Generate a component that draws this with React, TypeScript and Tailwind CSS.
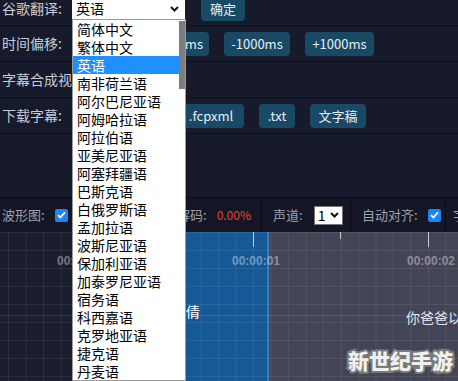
import React from 'react';

const languages = [
  '简体中文', '繁体中文', '英语', '南非荷兰语', '阿尔巴尼亚语', '阿姆哈拉语', '阿拉伯语',
  '亚美尼亚语', '阿塞拜疆语', '巴斯克语', '白俄罗斯语', '孟加拉语', '波斯尼亚语', '保加利亚语',
  '加泰罗尼亚语', '宿务语', '科西嘉语', '克罗地亚语', '捷克语', '丹麦语',
];

function Chevron() {
  return (
    <svg width="9" height="6" viewBox="0 0 9 6" className="shrink-0">
      <path d="M1 1l3.5 3.5L8 1" stroke="#111" strokeWidth="2" fill="none" />
    </svg>
  );
}

function Checkbox() {
  return (
    <span className="w-[13px] h-[13px] rounded-[2px] bg-[#1d84f2] flex items-center justify-center shrink-0">
      <svg width="9" height="8" viewBox="0 0 9 8">
        <path d="M1 4.2l2.3 2.3L8 1.3" stroke="#fff" strokeWidth="1.8" fill="none" />
      </svg>
    </span>
  );
}

function Btn({ label, w }: { label: string; w: string }) {
  return (
    <div className={`${w} h-[24px] rounded-[4px] bg-[#184a66] text-[13px] text-[#e6eef4] flex items-center justify-center shrink-0`}>
      {label}
    </div>
  );
}

function Row({ label, h = 'h-[36px]', children }: { label: string; h?: string; children?: React.ReactNode }) {
  return (
    <div className={`${h} flex items-center border-b border-[#0c0d16]`}>
      <div className="w-[72px] pl-[2px] text-[14px] text-[#c9cbd5] whitespace-nowrap shrink-0">{label}</div>
      {children}
    </div>
  );
}

export default function App() {
  return (
    <div className="relative w-[458px] h-[381px] overflow-hidden bg-[#171a2b] [font-family:'Noto_Sans_CJK_SC','Noto_Sans',sans-serif]">
      <div className="-mt-[8px]">
        <Row label="谷歌翻译:" h="h-[34px]">
          <div className="w-[113px] h-[22px] bg-white flex items-center justify-between pl-[4px] pr-[6px] text-[14px] text-black">
            <span>英语</span>
            <Chevron />
          </div>
          <div className="ml-[16px]">
            <Btn label="确定" w="w-[44px]" />
          </div>
        </Row>
        <Row label="时间偏移:">
          <div className="flex gap-[15px] ml-[7px]">
            <Btn label="-100ms" w="w-[56px]" />
            <Btn label="+100ms" w="w-[59px]" />
            <Btn label="-1000ms" w="w-[66px]" />
            <Btn label="+1000ms" w="w-[69px]" />
          </div>
        </Row>
        <Row label="字幕合成视频:" />
        <Row label="下载字幕:">
          <div className="flex gap-[15px] ml-[1px]">
            <Btn label=".srt" w="w-[38px]" />
            <Btn label=".ass" w="w-[37px]" />
            <Btn label=".fcpxml" w="w-[66px]" />
            <Btn label=".txt" w="w-[36px]" />
            <Btn label="文字稿" w="w-[56px]" />
          </div>
        </Row>
      </div>

      <div className="h-[63px]" />

      {/* toolbar */}
      <div className="h-[35px] flex items-stretch border-t border-[#0c0d16] bg-[#141626] text-[13px] text-[#9ea1ad] whitespace-nowrap">
        <div className="w-[262px] shrink-0 flex items-center justify-between pl-[2px] pr-[10px] border-r border-[#0a0b13]">
          <div className="flex items-center gap-[10px]">
            <span>波形图:</span>
            <Checkbox />
          </div>
          <div className="flex items-center gap-[10px]">
            <span>音频解码:</span>
            <span className="text-[12px] text-[#e5442f]">0.00%</span>
          </div>
        </div>
        <div className="w-[89px] shrink-0 flex items-center gap-[11px] pl-[11px] border-r border-[#0a0b13]">
          <span>声道:</span>
          <div className="w-[29px] h-[19px] bg-white border border-[#767676] flex items-center justify-between pl-[3px] pr-[3px] text-[14px] text-black">
            <span>1</span>
            <Chevron />
          </div>
        </div>
        <div className="w-[95px] shrink-0 flex items-center gap-[10px] pl-[11px] border-r border-[#0a0b13]">
          <span>自动对齐:</span>
          <Checkbox />
        </div>
        <div className="shrink-0 flex items-center pl-[7px]">
          <span>字幕吸附:</span>
        </div>
      </div>

      {/* timeline */}
      <div className="relative h-[149px] flex overflow-hidden">
        <div className="w-[150px] bg-[#1b1e2d]" />
        <div className="w-[119px] bg-[#155a96] border-r-2 border-[#3f7db8]" />
        <div className="flex-1 bg-[#434456]" />

        <div className="absolute inset-0 bg-[image:linear-gradient(to_right,rgba(255,255,255,0.07)_1px,transparent_1px),linear-gradient(to_bottom,rgba(255,255,255,0.07)_1px,transparent_1px)] bg-[size:17.5px_18px] bg-[position:8px_0px]" />
        <div className="absolute left-0 right-0 top-[83px] h-px bg-white/10" />

        <div className="absolute left-[78px] top-0 w-px h-[15px] bg-white/70" />
        <div className="absolute left-[165px] top-0 w-px h-[7px] bg-white/70" />
        <div className="absolute left-[253px] top-0 w-px h-[15px] bg-white/70" />
        <div className="absolute left-[340px] top-0 w-px h-[7px] bg-white/70" />
        <div className="absolute left-[428px] top-0 w-px h-[15px] bg-white/70" />

        <div className="absolute left-[57px] top-[20px] text-[12px] font-bold text-white/40 [font-family:'Liberation_Sans',sans-serif]">00:00:00</div>
        <div className="absolute left-[232px] top-[20px] text-[12px] font-bold text-white/40 [font-family:'Liberation_Sans',sans-serif]">00:00:01</div>
        <div className="absolute left-[407px] top-[20px] text-[12px] font-bold text-white/40 [font-family:'Liberation_Sans',sans-serif]">00:00:02</div>

        <div className="absolute left-[186px] top-[69px] text-[14px] text-white">倩</div>
        <div className="absolute left-[406px] top-[75px] text-[14px] text-[#e6e6ee] whitespace-nowrap">你爸爸以前</div>

        <div className="absolute left-[348px] top-[113px] text-[21px] font-black text-[#f0f0f0] [-webkit-text-stroke:4px_#7a7a7a] [paint-order:stroke_fill] whitespace-nowrap">
          新世纪手游
        </div>
      </div>

      {/* open language dropdown */}
      <div className="absolute left-[72px] top-[19px] w-[114px] h-[362px] bg-white border border-[#9a9a9a] flex">
        <div className="flex-1">
          {languages.map((lang) => (
            <div
              key={lang}
              className={
                lang === '英语'
                  ? 'h-[18px] leading-[18px] pl-[4px] text-[14px] bg-[#1e90ff] text-white whitespace-nowrap'
                  : 'h-[18px] leading-[18px] pl-[4px] text-[14px] text-black whitespace-nowrap'
              }
            >
              {lang}
            </div>
          ))}
        </div>
        <div className="w-[6px] pt-[1px]">
          <div className="h-[68px] bg-[#7d7d7d]" />
        </div>
      </div>
    </div>
  );
}
